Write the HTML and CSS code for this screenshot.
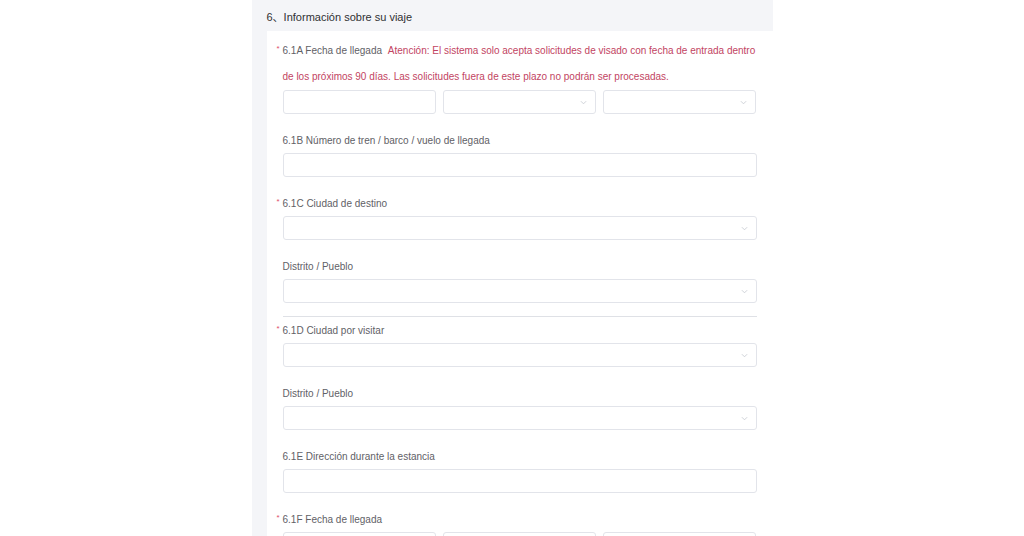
FILE: index.html
```html
<!doctype html>
<html lang="es">
  <head>
    <meta charset="UTF-8" />
    <meta name="viewport" content="width=device-width, initial-scale=1.0" />
    <title>Información sobre su viaje</title>
    <link rel="stylesheet" href="styles.css">
  </head>
  <body>
    <div class="panel">
      <div class="panel-title">6、Información sobre su viaje</div>

      <div class="card">
        <!-- 6.1A -->
        <div class="item">
          <div class="label label-long">
            <span class="req">*</span>6.1A Fecha de llegada
            <span class="warn">Atención: El sistema solo acepta solicitudes de visado con fecha de entrada dentro de los próximos 90 días. Las solicitudes fuera de este plazo no podrán ser procesadas.</span>
          </div>
          <div class="date-row">
            <input type="text" class="input" />
            <div class="select">
              <input type="text" class="input" readonly />
              <svg class="arrow" viewBox="0 0 8 5"><path d="M1 1l3 3 3-3" /></svg>
            </div>
            <div class="select">
              <input type="text" class="input" readonly />
              <svg class="arrow" viewBox="0 0 8 5"><path d="M1 1l3 3 3-3" /></svg>
            </div>
          </div>
        </div>

        <!-- 6.1B -->
        <div class="item">
          <div class="label">6.1B Número de tren / barco / vuelo de llegada</div>
          <input type="text" class="input" />
        </div>

        <!-- 6.1C -->
        <div class="item">
          <div class="label"><span class="req">*</span>6.1C Ciudad de destino</div>
          <div class="select">
            <input type="text" class="input" readonly />
            <svg class="arrow" viewBox="0 0 8 5"><path d="M1 1l3 3 3-3" /></svg>
          </div>
        </div>

        <div class="item">
          <div class="label">Distrito / Pueblo</div>
          <div class="select">
            <input type="text" class="input" readonly />
            <svg class="arrow" viewBox="0 0 8 5"><path d="M1 1l3 3 3-3" /></svg>
          </div>
        </div>

        <div class="divider"></div>

        <!-- 6.1D -->
        <div class="item">
          <div class="label"><span class="req">*</span>6.1D Ciudad por visitar</div>
          <div class="select">
            <input type="text" class="input" readonly />
            <svg class="arrow" viewBox="0 0 8 5"><path d="M1 1l3 3 3-3" /></svg>
          </div>
        </div>

        <div class="item">
          <div class="label">Distrito / Pueblo</div>
          <div class="select">
            <input type="text" class="input" readonly />
            <svg class="arrow" viewBox="0 0 8 5"><path d="M1 1l3 3 3-3" /></svg>
          </div>
        </div>

        <!-- 6.1E -->
        <div class="item">
          <div class="label">6.1E Dirección durante la estancia</div>
          <input type="text" class="input" />
        </div>

        <!-- 6.1F -->
        <div class="item">
          <div class="label"><span class="req">*</span>6.1F Fecha de llegada</div>
          <div class="date-row">
            <input type="text" class="input" />
            <div class="select">
              <input type="text" class="input" readonly />
              <svg class="arrow" viewBox="0 0 8 5"><path d="M1 1l3 3 3-3" /></svg>
            </div>
            <div class="select">
              <input type="text" class="input" readonly />
              <svg class="arrow" viewBox="0 0 8 5"><path d="M1 1l3 3 3-3" /></svg>
            </div>
          </div>
        </div>
      </div>
    </div>
  </body>
</html>
```

FILE: styles.css
```css
body {
  margin: 0;
  background-color: #fff;
  font-family: "Liberation Sans", Arial, "Noto Sans CJK SC", sans-serif;
  color: #606266;
  height: 536px;
  overflow: hidden;
}
.panel {
  width: 521px;
  margin: 0 auto;
  background-color: #f4f5f8;
  min-height: 100%;
}
.panel-title {
  height: 31px;
  line-height: 34px;
  padding-left: 15px;
  font-size: 11px;
  color: #303133;
}
/* White form card */
.card {
  margin-left: 15px;
  background-color: #fff;
  padding: 7px 16px 0 16px;
}
.item {
  margin-bottom: 13px;
}
.label {
  font-size: 10px;
  line-height: 24px;
  padding-top: 2px;
  color: #5f6166;
}
.label-long {
  line-height: 26px;
  padding-top: 0;
}
/* Required marker sits in the card padding, left of the label */
.req {
  display: inline-block;
  width: 6px;
  margin-left: -6px;
  color: #e0506a;
  font-size: 8px;
  line-height: 8px;
  vertical-align: 3px;
}
.warn {
  color: #c24462;
  margin-left: 3px;
}
.input {
  display: block;
  box-sizing: border-box;
  width: 100%;
  height: 24px;
  margin: 0;
  padding: 0 8px;
  border: 1px solid #e2e4ea;
  border-radius: 3px;
  background-color: #fff;
  font-family: inherit;
  font-size: 10px;
  outline: none;
}
.select {
  position: relative;
}
.select .arrow {
  position: absolute;
  right: 9px;
  top: 10px;
  width: 7px;
  height: 5px;
  fill: none;
  stroke: #c8cbd2;
  stroke-width: 1;
}
.date-row {
  display: grid;
  grid-template-columns: repeat(3, 1fr);
  gap: 7px;
}
.divider {
  height: 1px;
  background-color: #dfe1e6;
}
```
